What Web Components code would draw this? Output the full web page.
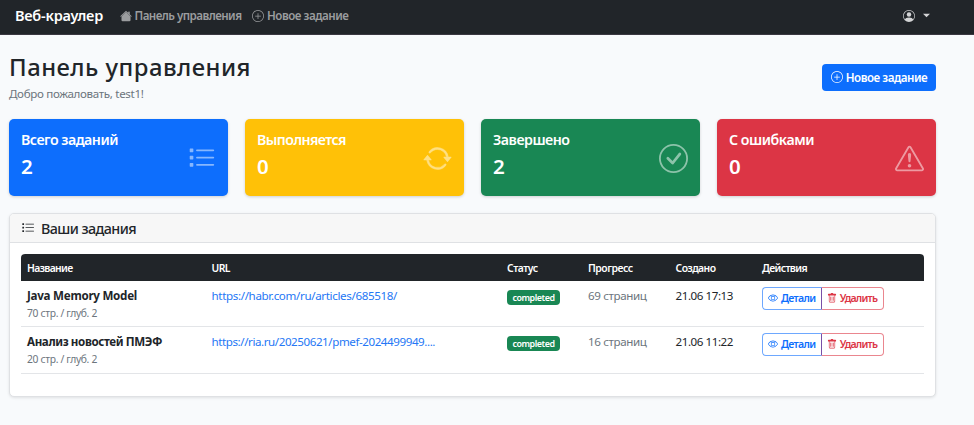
<!DOCTYPE html>
<html lang="ru">
<head>
<meta charset="utf-8">
<title>Веб-краулер</title>
<style>
body{margin:0;background:#f8fafc;color:#212529;font:11.6px/17px "Noto Sans","Open Sans",sans-serif}
</style>
</head>
<body>
<crawler-app></crawler-app>
<script>
const ICONS={
house:'<path d="M8.707 1.5a1 1 0 0 0-1.414 0L.646 8.146a.5.5 0 0 0 .708.708L8 2.207l6.646 6.647a.5.5 0 0 0 .708-.708L13 5.793V2.5a.5.5 0 0 0-.5-.5h-1a.5.5 0 0 0-.5.5v1.293z"/><path d="m8 2.3 6 6.2v5a1.5 1.5 0 0 1-1.5 1.5h-9A1.5 1.5 0 0 1 2 13.5v-5z"/>',
plus:'<path d="M8 15A7 7 0 1 1 8 1a7 7 0 0 1 0 14m0 1A8 8 0 1 0 8 0a8 8 0 0 0 0 16"/><path d="M8 4a.5.5 0 0 1 .5.5v3h3a.5.5 0 0 1 0 1h-3v3a.5.5 0 0 1-1 0v-3h-3a.5.5 0 0 1 0-1h3v-3A.5.5 0 0 1 8 4"/>',
person:'<path d="M11 6a3 3 0 1 1-6 0 3 3 0 0 1 6 0"/><path fill-rule="evenodd" d="M0 8a8 8 0 1 1 16 0A8 8 0 0 1 0 8m8-7a7 7 0 0 0-5.468 11.37C3.242 11.226 4.805 10 8 10s4.757 1.225 5.468 2.37A7 7 0 0 0 8 1"/>',
list:'<path fill-rule="evenodd" d="M5 11.5a.5.5 0 0 1 .5-.5h9a.5.5 0 0 1 0 1h-9a.5.5 0 0 1-.5-.5m0-4a.5.5 0 0 1 .5-.5h9a.5.5 0 0 1 0 1h-9a.5.5 0 0 1-.5-.5m0-4a.5.5 0 0 1 .5-.5h9a.5.5 0 0 1 0 1h-9a.5.5 0 0 1-.5-.5"/><path d="M1.800 2.500h1.400q.3 0 .3.3v1.400q0 .3-.3.3H1.800q-.3 0-.3-.3V2.800q0-.3.3-.3m0 4h1.400q.3 0 .3.3v1.400q0 .3-.3.3H1.800q-.3 0-.3-.3V6.800q0-.3.3-.3m0 4h1.400q.3 0 .3.3v1.400q0 .3-.3.3H1.800q-.3 0-.3-.3v-1.400q0-.3.3-.3"/>',
repeat:'<path d="M11.534 7h3.932a.25.25 0 0 1 .192.41l-1.966 2.36a.25.25 0 0 1-.384 0l-1.966-2.36a.25.25 0 0 1 .192-.41m-11 2h3.932a.25.25 0 0 0 .192-.41L2.692 6.23a.25.25 0 0 0-.384 0L.342 8.59A.25.25 0 0 0 .534 9"/><path fill-rule="evenodd" d="M8 3c-1.552 0-2.94.707-3.857 1.818a.5.5 0 1 1-.771-.636A6.002 6.002 0 0 1 13.917 7H12.9A5 5 0 0 0 8 3M3.1 9a5.002 5.002 0 0 0 8.757 2.182.5.5 0 1 1 .771.636A6.002 6.002 0 0 1 2.083 9z" stroke="currentColor" stroke-width=".3"/>',
check:'<path d="M8 15A7 7 0 1 1 8 1a7 7 0 0 1 0 14m0 1A8 8 0 1 0 8 0a8 8 0 0 0 0 16"/><path d="m10.97 4.97-.02.022-3.473 4.425-2.093-2.094a.75.75 0 0 0-1.06 1.06L6.97 11.03a.75.75 0 0 0 1.079-.02l3.992-4.99a.75.75 0 0 0-1.071-1.05"/>',
warn:'<path d="M7.938 2.016A.13.13 0 0 1 8.002 2a.13.13 0 0 1 .063.016.15.15 0 0 1 .054.057l6.857 11.667c.036.06.035.124.002.183a.2.2 0 0 1-.054.06.1.1 0 0 1-.066.017H1.146a.1.1 0 0 1-.066-.017.2.2 0 0 1-.054-.06.18.18 0 0 1 .002-.183L7.884 2.073a.15.15 0 0 1 .054-.057m1.044-.45a1.13 1.13 0 0 0-1.96 0L.165 13.233c-.457.778.091 1.767.98 1.767h13.713c.889 0 1.438-.99.98-1.767z"/><path d="M7.002 12a1 1 0 1 1 2 0 1 1 0 0 1-2 0M7.1 5.995a.905.905 0 1 1 1.8 0l-.35 3.507a.552.552 0 0 1-1.1 0z"/>',
eye:'<path d="M16 8s-3-5.500-8-5.500S0 8 0 8s3 5.500 8 5.500S16 8 16 8M1.173 8a13 13 0 0 1 1.660-2.043C4.120 4.668 5.880 3.500 8 3.500s3.879 1.168 5.168 2.457A13 13 0 0 1 14.828 8q-.086.130-.195.288c-.335.480-.830 1.120-1.465 1.755C11.879 11.332 10.119 12.500 8 12.500s-3.879-1.168-5.168-2.457A13 13 0 0 1 1.172 8z"/><path d="M8 5.500a2.500 2.500 0 1 0 0 5 2.500 2.500 0 0 0 0-5M4.500 8a3.500 3.500 0 1 1 7 0 3.500 3.500 0 0 1-7 0"/>',
trash:'<path d="M5.500 5.500A.5.500 0 0 1 6 6v6a.5.500 0 0 1-1 0V6a.5.500 0 0 1 .500-.500m2.500 0a.5.500 0 0 1 .500.500v6a.5.500 0 0 1-1 0V6a.5.500 0 0 1 .500-.500m3 .500a.5.500 0 0 0-1 0v6a.5.500 0 0 0 1 0z"/><path d="M14.500 3a1 1 0 0 1-1 1H13v9a2 2 0 0 1-2 2H5a2 2 0 0 1-2-2V4h-.500a1 1 0 0 1-1-1V2a1 1 0 0 1 1-1H6a1 1 0 0 1 1-1h2a1 1 0 0 1 1 1h3.500a1 1 0 0 1 1 1zM4.118 4 4 4.059V13a1 1 0 0 0 1 1h6a1 1 0 0 0 1-1V4.059L11.882 4z"/>',
caret:'<path d="M0 4h16L8 12z"/>'
};
function define(name,render,after){
  customElements.define(name,class extends HTMLElement{
    connectedCallback(){
      if(this.shadowRoot)return;
      const root=this.attachShadow({mode:'open'});
      root.innerHTML=render(this);
      if(after)after(this);
    }
  });
}
const at=(el,n,d='')=>el.getAttribute(n)??d;

define('ui-icon',el=>`<style>:host{display:block;flex:none;width:${at(el,'size',12)}px;height:${at(el,'size',12)}px}svg{display:block;width:100%;height:100%}</style><svg viewBox="0 0 16 16" fill="currentColor">${ICONS[at(el,'name')]}</svg>`);

/* Single-line text whose tracking is adjusted to fill the width in "w". */
define('fit-text',()=>`<style>:host{display:inline-block;white-space:nowrap;flex:none}</style><slot></slot>`,el=>{
  const natural=el.getBoundingClientRect().width;
  const n=el.textContent.length;
  el.style.letterSpacing=((Number(at(el,'w'))-natural)/n).toFixed(3)+'px';
});

define('app-navbar',()=>`<style>
:host{display:flex;align-items:center;box-sizing:border-box;height:35px;padding:0 44px 3px 15px;background:#212529;border-bottom:1px solid #3a3841;color:#9b9d9f}
.brand{color:#fff;font-size:14.500px;font-weight:650;margin-right:16.500px}
.link{display:flex;align-items:center;gap:3px;margin-right:10.500px;font-weight:600}
.user{display:flex;align-items:center;gap:8px;margin-left:auto;color:#d3d4d5}
</style>
<fit-text class="brand" w="88">Веб-краулер</fit-text>
<div class="link"><ui-icon name="house" size="12"></ui-icon><fit-text w="107">Панель управления</fit-text></div>
<div class="link"><ui-icon name="plus" size="12"></ui-icon><fit-text w="81.500">Новое задание</fit-text></div>
<div class="user"><ui-icon name="person" size="12"></ui-icon><ui-icon name="caret" size="7"></ui-icon></div>`);

define('page-heading',()=>`<style>
:host{display:flex;align-items:center;justify-content:space-between}
h1{margin:0;font-size:23.800px;line-height:28px;font-weight:500;color:#212529}
p{margin:4px 0 0;line-height:17px;color:#6c757d;font-size:11.600px}
.btn{display:flex;align-items:center;justify-content:center;gap:3px;box-sizing:border-box;width:114px;height:27px;margin-top:-1px;border-radius:4px;background:#0d6efd;color:#fff;font:600 11.600px/25px "Noto Sans",sans-serif;border:0;padding:0}
</style>
<div><h1><fit-text w="242">Панель управления</fit-text></h1><p><fit-text w="134.500">Добро пожаловать, test1!</fit-text></p></div>
<button class="btn"><ui-icon name="plus" size="12"></ui-icon><fit-text w="81.500">Новое задание</fit-text></button>`);

define('stat-card',el=>`<style>
:host{display:flex;align-items:center;justify-content:space-between;box-sizing:border-box;height:77px;padding:0 12px;border-radius:5px;background:${at(el,'color')};color:#fff;box-shadow:0 1px 3px #0000002b}
.title{font-size:14.200px;line-height:18px;font-weight:560}
.value{font-size:20.500px;line-height:28px;font-weight:560;margin-top:3px}
ui-icon{opacity:.5;margin-top:2px}
.copy{padding-bottom:4px}
</style>
<div class="copy"><div class="title"><fit-text w="${at(el,'w')}">${at(el,'label')}</fit-text></div><div class="value">${at(el,'value')}</div></div>
<ui-icon name="${at(el,'icon')}" size="29"></ui-icon>`);

const COLS='184.500px 295.500px 81px 87.500px 86.500px 1fr';
define('job-row',el=>`<style>
:host{display:grid;grid-template-columns:${COLS};box-sizing:border-box;height:46.300px;padding:6px 6px 0;border-bottom:1px solid #e3e5e8;align-items:start}
.name{font-weight:680;line-height:18px;color:#212529}
.meta{font-size:10.300px;line-height:17px;color:#6c757d}
a{color:#2577f5;text-decoration:none;line-height:18px}
.prog{color:#6c757d;line-height:18px}.date{line-height:18px}
.badge{display:flex;align-items:center;justify-content:center;width:53px;height:15px;border-radius:4px;background:#198754;color:#fff;font-size:8.900px;font-weight:650;margin-top:2.500px;line-height:13px}
.group{display:flex}
.b{display:flex;align-items:center;justify-content:center;gap:3px;box-sizing:border-box;height:22.500px;border:1px solid;font-size:10.500px;font-weight:600;line-height:18px;padding-bottom:1.500px}
.d{width:59.500px;color:#0d6efd;border-color:#6ea8fe;border-right-color:#7850a8;border-radius:4px 0 0 4px}
.r{width:62px;color:#dc3545;border-color:#ea868f;border-left:0;border-radius:0 4px 4px 0}
</style>
<div><div class="name"><fit-text w="${at(el,'nw')}">${at(el,'name')}</fit-text></div><div class="meta"><fit-text w="70">${at(el,'meta')}</fit-text></div></div>
<a><fit-text w="${at(el,'uw')}">${at(el,'url')}</fit-text></a>
<div><div class="badge"><fit-text w="42">completed</fit-text></div></div>
<div class="prog"><fit-text w="58.500">${at(el,'progress')}</fit-text></div>
<div class="date"><fit-text w="57.500">${at(el,'date')}</fit-text></div>
<div class="group"><div class="b d"><ui-icon name="eye" size="10"></ui-icon><fit-text w="34.500">Детали</fit-text></div><div class="b r"><ui-icon name="trash" size="10"></ui-icon><fit-text w="37.500">Удалить</fit-text></div></div>`);

define('jobs-panel',()=>`<style>
:host{display:block;box-sizing:border-box;height:184px;border:1px solid #dfe1e4;border-radius:5px;background:#fff;box-shadow:0 1px 3px #0000001a;overflow:hidden}
header{display:flex;align-items:center;gap:6px;box-sizing:border-box;height:29px;padding:0 11px;background:#f7f7f7;border-bottom:1px solid #dfe1e4;font-size:14.300px;font-weight:530}
.table{margin:11px 11px 0}
.head{display:grid;grid-template-columns:${COLS};align-items:center;box-sizing:border-box;height:27px;padding:1px 6px 0;border-radius:4px 4px 0 0;background:#212529;color:#fff;font-size:10.400px;font-weight:650}
</style>
<header><ui-icon name="list" size="14"></ui-icon><fit-text w="95">Ваши задания</fit-text></header>
<div class="table"><div class="head"><div><fit-text w="45.500">Название</fit-text></div><div><fit-text w="18.500">URL</fit-text></div><div><fit-text w="30.500">Статус</fit-text></div><div><fit-text w="44.500">Прогресс</fit-text></div><div><fit-text w="40">Создано</fit-text></div><div><fit-text w="45">Действия</fit-text></div></div>
<job-row name="Java Memory Model" nw="110" meta="70 стр. / глуб. 2" url="https://habr.com/ru/articles/685518/" uw="185.500" progress="69 страниц" date="21.06 17:13"></job-row>
<job-row name="Анализ новостей ПМЭФ" nw="135" meta="20 стр. / глуб. 2" url="https://ria.ru/20250621/pmef-2024499949...." uw="223.500" progress="16 страниц" date="21.06 11:22"></job-row></div>`);

define('crawler-app',()=>`<style>
:host{display:block;height:425px;overflow:hidden}
main{width:927px;margin:10px 0 0 9px}
page-heading{height:74px;box-sizing:border-box;padding-bottom:9px}
.stats{display:grid;grid-template-columns:repeat(4,219px);justify-content:space-between;margin-bottom:17px}
</style>
<app-navbar></app-navbar>
<main><page-heading></page-heading>
<div class="stats">
<stat-card color="#0d6efd" label="Всего заданий" w="97" value="2" icon="list"></stat-card>
<stat-card color="#ffc107" label="Выполняется" w="89" value="0" icon="repeat"></stat-card>
<stat-card color="#198754" label="Завершено" w="76.500" value="2" icon="check"></stat-card>
<stat-card color="#dc3545" label="С ошибками" w="85" value="0" icon="warn"></stat-card>
</div>
<jobs-panel></jobs-panel></main>`);
</script>
</body>
</html>
